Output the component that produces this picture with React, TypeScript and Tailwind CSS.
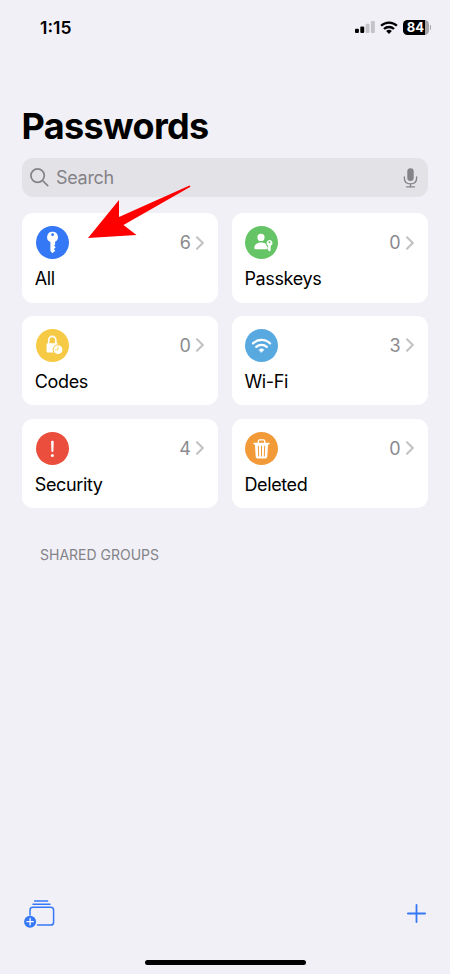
import type { ReactNode } from "react";

interface Category {
  label: string;
  count: number;
  color: string;
  icon: ReactNode;
}

const KeyIcon = () => (
  <svg viewBox="0 0 33 33" className="size-full" fill="white">
    <path
      fillRule="evenodd"
      d="M16.5 5.8a5.3 5.3 0 0 0-2.1 10.2v9.1l2 2.2 2.9-2.6-1.5-1.6 1.9-1.7-1.6-1.8 1-.8v-3A5.3 5.3 0 0 0 16.5 5.8Zm.1 1.5a1.4 1.4 0 1 1 0 2.8 1.4 1.4 0 0 1 0-2.8Z"
    />
  </svg>
);

const PasskeyIcon = () => (
  <svg viewBox="0 0 33 33" className="size-full" fill="white">
    <circle cx="16" cy="11.4" r="3.6" />
    <path d="M9.3 22c0-3.2 2.8-5.5 6.7-5.5 2 0 3.700.5 4.900 1.500.3 1.300.9 2.100 1.700 2.700v2.500H10.400c-.8 0-1.100-.4-1.100-1.200Z" />
    <path
      fillRule="evenodd"
      d="M24.4 14a3 3 0 0 0-1.300 5.600v4.600l1.300 1.400 1.600-1.600-.8-1 .8-.9-.8-1 .8-.7v-.8A3 3 0 0 0 24.400 14Zm0 1.200a1 1 0 1 1 0 2 1 1 0 0 1 0-2Z"
    />
  </svg>
);

const CodesIcon = () => (
  <svg viewBox="0 0 33 33" className="size-full">
    <path d="M12.700 15v-3.600a3.600 4 0 0 1 7.200 0V15" fill="none" stroke="white" strokeWidth="1.600" />
    <rect x="10.600" y="14.200" width="11.400" height="9.300" rx="1.200" fill="white" />
    <circle cx="22" cy="20.700" r="5.400" fill="#f7ca45" />
    <circle cx="22" cy="20.700" r="4.400" fill="white" />
    <path d="M22 17.800v3h-2.300" fill="none" stroke="#f7ca45" strokeWidth=".8" strokeLinecap="round" />
  </svg>
);

const WifiIcon = () => (
  <svg viewBox="0 0 33 33" className="size-full" fill="none" stroke="white" strokeWidth="2.200" strokeLinecap="round">
    <path d="M8 14.400a12.100 12.100 0 0 1 17 0" />
    <path d="M11.200 17.900a7.700 7.700 0 0 1 10.600 0" />
    <path d="M14.100 20.700a3.600 3.600 0 0 1 4.800 0l-2.400 2.600Z" fill="white" strokeWidth=".6" strokeLinejoin="round" />
  </svg>
);

const SecurityIcon = () => (
  <svg viewBox="0 0 33 33" className="size-full" fill="white">
    <path d="M15.1 9.600c0-1.300 2.600-1.300 2.600 0l-.3 9.600c0 1.100-2 1.100-2 0Z" />
    <circle cx="16.400" cy="23.400" r="1.500" />
  </svg>
);

const TrashIcon = () => (
  <svg viewBox="0 0 33 33" className="size-full">
    <path d="M13.300 11V9.300c0-.9.5-1.400 1.400-1.400h3.700c.9 0 1.400.5 1.400 1.400V11" fill="none" stroke="white" strokeWidth="1.300" />
    <path d="M9.100 10.700h14.800a.85.85 0 0 1 0 1.700h-.8l-.8 12.200c-.1 1.200-.8 1.900-2 1.900h-7.600c-1.200 0-1.900-.7-2-1.900L9.900 12.400h-.8a.85.85 0 0 1 0-1.700Z" fill="white" />
    <path d="m13.300 14.200.4 9.800M16.500 14.200V24M19.700 14.200l-.4 9.800" stroke="#f19a37" strokeWidth="1" strokeLinecap="round" />
  </svg>
);

const categories: Category[] = [
  { label: "All", count: 6, color: "bg-[#3478f6]", icon: <KeyIcon /> },
  { label: "Passkeys", count: 0, color: "bg-[#65c466]", icon: <PasskeyIcon /> },
  { label: "Codes", count: 0, color: "bg-[#f7ca45]", icon: <CodesIcon /> },
  { label: "Wi-Fi", count: 3, color: "bg-[#59a9e1]", icon: <WifiIcon /> },
  { label: "Security", count: 4, color: "bg-[#eb4e3d]", icon: <SecurityIcon /> },
  { label: "Deleted", count: 0, color: "bg-[#f19a37]", icon: <TrashIcon /> },
];

const StatusBar = () => (
  <header className="flex h-[54px] items-center justify-between pr-[19px] pl-10">
    <span className="mt-[2px] text-[17.5px] font-semibold">1:15</span>
    <div className="flex items-center gap-[5px]">
      <svg width="20" height="12" viewBox="0 0 20 12">
        <rect x="0" y="7.7" width="3.9" height="4.3" rx="1" />
        <rect x="5.3" y="5.5" width="3.9" height="6.5" rx="1" />
        <rect x="10.6" y="2.8" width="3.9" height="9.2" rx="1" fill="#c4c4c8" />
        <rect x="15.9" y="0" width="3.9" height="12" rx="1" fill="#c4c4c8" />
      </svg>
      <svg width="18" height="13" viewBox="0 0 18 13" fill="none" stroke="black" strokeWidth="2.3">
        <path d="M1.1 4.8a11.3 11.3 0 0 1 15.8 0" />
        <path d="M4 8a7.2 7.2 0 0 1 10 0" />
        <path d="M6.1 10.1a4.2 4.2 0 0 1 5.8 0L9 13Z" fill="black" stroke="none" />
      </svg>
      <div className="flex items-center gap-px">
        <div className="flex h-[15px] w-[26px] items-center justify-center rounded-[4.5px] bg-linear-to-r from-black from-84% to-[#a5a5a9] to-84% pt-px text-[13px] leading-none font-bold text-white">
          84
        </div>
        <span className="h-[5px] w-[1.5px] rounded-r-full bg-[#a5a5a9]" />
      </div>
    </div>
  </header>
);

const SearchField = () => (
  <div className="mt-[10px] flex h-[39px] items-center rounded-[11px] bg-[#e3e2e7] pr-[10px] pl-2 text-[#838388]">
    <svg width="19" height="19" viewBox="0 0 19 19" fill="none" stroke="currentColor" strokeWidth="1.7" strokeLinecap="round">
      <circle cx="7.6" cy="7.6" r="6.7" />
      <path d="m12.5 12.5 5.2 5.2" />
    </svg>
    <span className="ml-[7px] flex-1 text-[18px] tracking-[-0.3px]">Search</span>
    <svg width="15" height="20" viewBox="0 0 15 20" fill="none" stroke="currentColor" strokeWidth="1.3" strokeLinecap="round">
      <rect x="4.3" y=".3" width="6.4" height="12.7" rx="3.2" fill="currentColor" stroke="none" />
      <path d="M1.4 8.8v1.4c0 3.4 2.4 5.6 6.1 5.6s6.1-2.2 6.1-5.6V8.8M7.5 15.8v3M3.6 18.9h7.8" />
    </svg>
  </div>
);

const CategoryCard = ({ label, count, color, icon }: Category) => (
  <button className="flex h-[89.5px] flex-col rounded-[11px] bg-white px-[13.5px] pt-[13px] text-left">
    <div className="flex w-full items-center">
      <div className={`size-[33px] rounded-full ${color}`}>{icon}</div>
      <span className="ml-auto text-[18px] text-[#8a8a8e]">{count}</span>
      <svg className="mr-[0.5px] ml-[5.5px]" width="8" height="14" viewBox="0 0 8 14" fill="none" stroke="#c2c2c5" strokeWidth="2.1" strokeLinecap="round" strokeLinejoin="round">
        <path d="m1 1.300 5.800 5.700L1 12.700" />
      </svg>
    </div>
    <span className="mt-[7px] -ml-[0.7px] text-[18px] leading-[26px] tracking-[-0.38px]">{label}</span>
  </button>
);

export default function App() {
  return (
    <div className="flex h-[974px] w-[450px] flex-col overflow-hidden bg-[#f1f0f6] font-['Inter','Liberation_Sans',sans-serif] text-black">
      <StatusBar />

      <main className="relative flex-1 px-[22px] pt-[51px]">
        <h1 className="-ml-[0.5px] text-[36px] leading-[43px] font-bold tracking-[-0.65px]">Passwords</h1>
        <SearchField />
        <div className="mt-4 grid grid-cols-2 gap-[13.3px]">
          {categories.map((category) => (
            <CategoryCard key={category.label} {...category} />
          ))}
        </div>
        <h2 className="mt-[37px] ml-[18px] text-[14px] leading-5 text-[#838388]">SHARED GROUPS</h2>

        {/* callout arrow over the "All" card */}
        <svg className="pointer-events-none absolute top-[130px] left-[88px]" width="104" height="56" viewBox="0 0 104 56" fill="red">
          <path d="M0 54 31 16v17L101.5 1.5Q103 2 102 3L35.500 41 48.500 51Z" />
        </svg>
      </main>

      <footer className="flex flex-col px-6">
        <div className="flex items-start justify-between">
          <button aria-label="New shared group">
            <svg width="31" height="29" viewBox="0 0 31 29" fill="none" stroke="#3478f6" strokeWidth="1.5" strokeLinecap="round">
              <path d="M10.6 1h13M9 4.2h17" />
              <path d="M6 15v-4.800c0-1.900 1-2.900 2.900-2.900h17.800c1.900 0 2.900 1 2.900 2.900v12c0 1.900-1 2.900-2.900 2.900H13.500" />
              <circle cx="6.1" cy="21.7" r="6" fill="#3478f6" stroke="none" />
              <path d="M6.1 18.5v6.4M2.9 21.7h6.400" stroke="white" strokeWidth="1.3" />
            </svg>
          </button>
          <button aria-label="Add password" className="mt-[3.5px] mr-[0.5px]">
            <svg width="19" height="19" viewBox="0 0 19 19" stroke="#3478f6" strokeWidth="1.8" strokeLinecap="round">
              <path d="M9.5 .9v17.200M.9 9.5h17.200" />
            </svg>
          </button>
        </div>
        <div className="mt-[31px] mb-[9px] h-[5px] w-[161px] self-center rounded-full bg-black" />
      </footer>
    </div>
  );
}
